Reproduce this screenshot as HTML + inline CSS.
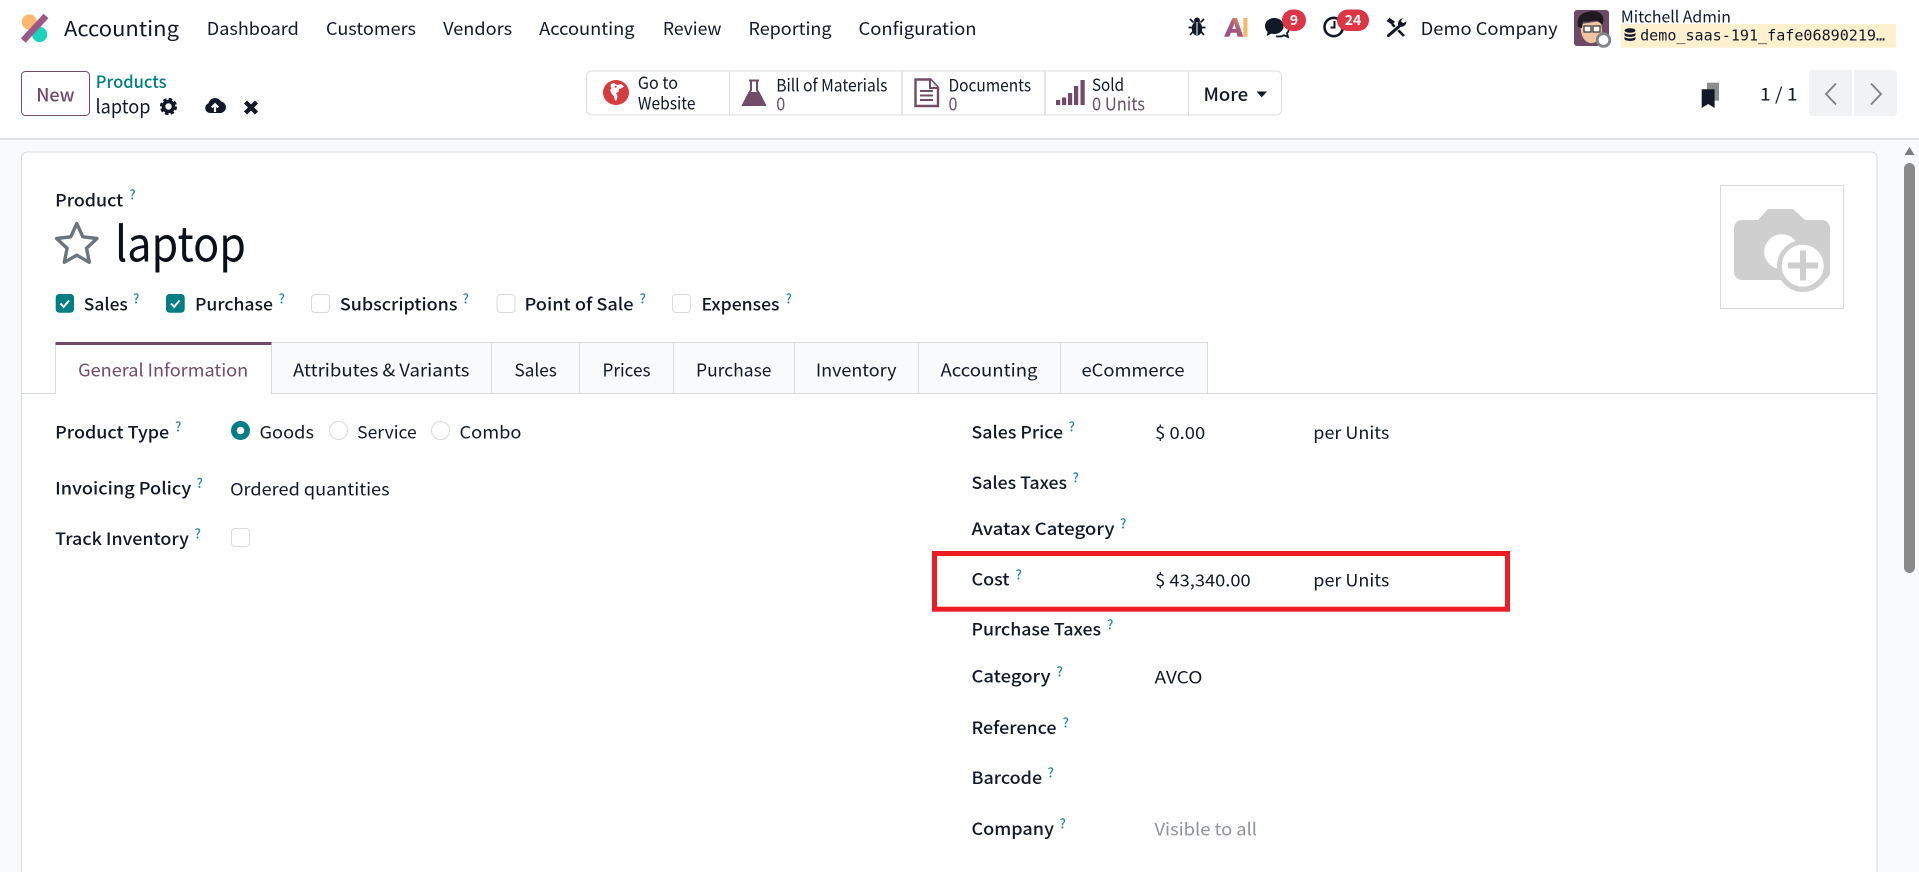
<!DOCTYPE html>
<html lang="en">
<head>
<meta charset="utf-8">
<title>laptop - Product</title>
<style>
html,body{margin:0;padding:0;width:1919px;height:872px;overflow:hidden;background:#fff}
svg{display:block;position:absolute;left:0;top:0}
text{font-family:"Noto Sans CJK JP","Liberation Sans",sans-serif;fill:#111827;font-size:17px;transform:translateX(-.5px)}
.m{font-weight:500;font-size:17px;fill:#111827}
.q{font-size:13px;font-weight:500;fill:#2a86b0}
.p{fill:#66536a}
.n{font-size:17.5px}
.t{font-size:17px}
.z{font-size:18px}
</style>
</head>
<body>
<svg width="1919" height="872" viewBox="0 0 1919 872" xmlns="http://www.w3.org/2000/svg">
<defs>
<linearGradient id="ag" x1="0" y1="1" x2="1" y2="0"><stop offset="0" stop-color="#9b4f8c"/><stop offset="0.55" stop-color="#a8587a"/><stop offset="1" stop-color="#f5a94f"/></linearGradient>
</defs>
<!-- backgrounds -->
<rect x="0" y="0" width="1919" height="139" fill="#fff"/>
<rect x="0" y="138" width="1919" height="2" fill="#dfe1e4"/>
<rect x="0" y="140" width="1919" height="732" fill="#f9fafb"/>
<path d="M21.5 880V158a6 6 0 0 1 6-6H1871a6 6 0 0 1 6 6V880Z" fill="#fff" stroke="#d8dadd" stroke-width="1"/>
<!-- scrollbar -->
<path d="M1909.5 147l5 8h-10z" fill="#7c7c7c"/>
<rect x="1904" y="163" width="11" height="410" rx="5.5" fill="#8a8a8a"/>

<!-- logo -->
<circle cx="29.4" cy="22" r="7.6" fill="#fbb970"/>
<circle cx="39.6" cy="34.5" r="7.6" fill="#1ad3bb"/>
<path d="M23.3 40.5L46 16" stroke="#9c5789" stroke-width="6.5"/>
<!-- nav -->
<text x="64.5" y="36" textLength="115" lengthAdjust="spacingAndGlyphs" style="font-size:20.5px">Accounting</text>
<text class="n" x="207.3" y="35" textLength="92" lengthAdjust="spacingAndGlyphs">Dashboard</text>
<text class="n" x="326.5" y="35" textLength="90" lengthAdjust="spacingAndGlyphs">Customers</text>
<text class="n" x="443.6" y="35" textLength="69" lengthAdjust="spacingAndGlyphs">Vendors</text>
<text class="n" x="539.6" y="35" textLength="95.5" lengthAdjust="spacingAndGlyphs">Accounting</text>
<text class="n" x="663.4" y="35" textLength="58.6" lengthAdjust="spacingAndGlyphs">Review</text>
<text class="n" x="749" y="35" textLength="83" lengthAdjust="spacingAndGlyphs">Reporting</text>
<text class="n" x="859" y="35" textLength="118" lengthAdjust="spacingAndGlyphs">Configuration</text>

<!-- systray -->
<g fill="#111827">
<ellipse cx="1197" cy="28.5" rx="5.2" ry="7"/><circle cx="1197" cy="20.5" r="3"/>
<path d="M1190 19l3.5 3.5M1204 19l-3.5 3.5M1188.5 27.5h5M1205.5 27.5h-5M1190 35l3.500-4M1204 35l-3.500-4" stroke="#111827" stroke-width="1.7" fill="none"/>
<path d="M1197 22v13" stroke="#fff" stroke-width="1"/>
</g>
<path fill-rule="evenodd" d="M1224 36.7L1232.500 18h4.500l6.300 18.700h-5.500l-1.300-4h-5.500l-1.800 4zM1232.300 29h3.500l-1.400-5.500z" fill="url(#ag)"/>
<rect x="1243.300" y="18" width="4.200" height="18.700" fill="#f9b868"/>
<path d="M1265 26c0-4.700 4.400-8 9.300-8s9.300 3.300 9.300 8-4.400 8-9.300 8c-1 0-2-.1-3-.4l-4.700 2.500 1-4.200c-1.600-1.400-2.600-3.500-2.600-5.900z" fill="#111827"/>
<path d="M1276 36.200c2.500.5 6 .3 8-1l4 1.800-1-3.800c1-1 1.600-2.200 1.800-3.400" fill="none" stroke="#111827" stroke-width="1.8"/>
<rect x="1282" y="9.5" width="24" height="21.500" rx="10.700" fill="#dc3545"/>
<text x="1294.500" y="25" text-anchor="middle" style="font-size:14px;font-weight:700;fill:#fff">9</text>
<circle cx="1333.700" cy="27" r="9.200" fill="#fff" stroke="#111827" stroke-width="2.600"/>
<path d="M1334.500 21v6.500h-4" fill="none" stroke="#111827" stroke-width="2"/>
<rect x="1337" y="9.5" width="32" height="21.500" rx="10.700" fill="#dc3545"/>
<text x="1353.500" y="25" text-anchor="middle" style="font-size:14px;font-weight:700;fill:#fff">24</text>
<!-- tools: screwdriver + wrench -->
<path d="M1392 24l12 12" stroke="#111827" stroke-width="2.600" fill="none"/>
<path d="M1386.500 21l3-3.200 5.500 4-2.800 3z" fill="#111827"/>
<path d="M1398.800 26.800l-11 8.300" stroke="#fff" stroke-width="5" fill="none"/>
<path d="M1399 26.500l-10.500 9" stroke="#111827" stroke-width="3" stroke-linecap="round" fill="none"/>
<path d="M1403 18.200c-3.500.5-5.600 3.500-4.800 7.200l2 1.500c3.500.3 6.200-2 6.300-5.500l-3.300 1.700-2.400-1.900z" fill="#111827"/>
<text x="1421.200" y="35" class="n" textLength="137" lengthAdjust="spacingAndGlyphs">Demo Company</text>

<!-- avatar -->
<rect x="1574" y="10" width="35" height="36" rx="3" fill="#6d4a66"/>
<path d="M1581 24c-1 8 1 17 9 19 7 1 12-6 12-13l-1-9z" fill="#efc4a2"/>
<path d="M1578 27c-2-9 3-14 9-15 7-2 14-1 16 5 1 3 0 6-1 8-3-4-7-5-10-4-4 1-7 1-9 0l-1 7z" fill="#1f1a22"/>
<rect x="1584" y="26" width="7" height="6" fill="#fff" stroke="#333" stroke-width="1.200"/>
<rect x="1593" y="26" width="7" height="6" fill="#fff" stroke="#333" stroke-width="1.200"/>
<circle cx="1603.500" cy="40" r="6.300" fill="#fff" stroke="#808489" stroke-width="2.800"/>
<text x="1621.400" y="22.700" style="font-size:16px" textLength="110" lengthAdjust="spacingAndGlyphs">Mitchell Admin</text>
<rect x="1621" y="24" width="275" height="23.700" fill="#fff1cf"/>
<g fill="#111827"><ellipse cx="1630" cy="30.500" rx="5.500" ry="2.300"/><path d="M1624.500 32.500c1 2.600 10 2.600 11 0v2.500c-1 2.600-10 2.600-11 0zM1624.500 36.500c1 2.600 10 2.600 11 0v2.500c-1 2.600-10 2.600-11 0z"/></g>
<text x="1640.600" y="40.700" style="font-family:'DejaVu Sans Mono','Liberation Mono',monospace;font-size:15px" textLength="245" lengthAdjust="spacingAndGlyphs">demo_saas-191_fafe06890219…</text>

<!-- New + breadcrumb -->
<rect x="21.500" y="71.500" width="68" height="44" rx="4" fill="#fff" stroke="#714b67" stroke-width="1"/>
<text x="36.700" y="101.700" style="font-size:18px;font-weight:500;fill:#714b67" textLength="38.300" lengthAdjust="spacingAndGlyphs">New</text>
<text x="96.300" y="88" style="font-size:17px;font-weight:500;fill:#017e84" textLength="70.700" lengthAdjust="spacingAndGlyphs">Products</text>
<text x="96" y="113.300" style="font-size:19px" textLength="55" lengthAdjust="spacingAndGlyphs">laptop</text>
<circle cx="168.500" cy="106.500" r="5" fill="none" stroke="#111827" stroke-width="3.600"/>
<circle cx="168.500" cy="106.500" r="7.200" fill="none" stroke="#111827" stroke-width="2.800" stroke-dasharray="3.500 2.150"/>
<path d="M210 113a5 5 0 0 1-1.500-9.700 6.800 6.800 0 0 1 12.500-1.800 5.800 5.800 0 0 1-.2 11.500z" fill="#111827"/>
<path d="M215 112v-7M211.800 107.500l3.200-3.300 3.200 3.300" stroke="#fff" stroke-width="2.200" fill="none"/>
<path d="M245.500 102l11 11M256.500 102l-11 11" stroke="#111827" stroke-width="4.400"/>

<!-- button group -->
<rect x="586.500" y="71" width="695" height="44" rx="5" fill="#fff" stroke="#dcdee1" stroke-width="1"/>
<path d="M729.500 71v44M1188.500 71v44" stroke="#dcdee1" stroke-width="1"/>
<path d="M902 71v44M1045 71v44" stroke="#dcdee1" stroke-width="1.600"/>
<!-- globe -->
<ellipse cx="616" cy="92.500" rx="13" ry="12.500" fill="#d63b3f"/>
<path d="M611 84l3-1 3 2 4-1 3 2.500-3 2-2 .5-.5 3-2.500 1 1.500 3-1 4.500-1.500 0-1-4-2.500-3-1.500-3.500 1.500-1.500-1-2.500z" fill="#fff"/>
<path d="M615 85.500l2 1-1 1.500-1.500-1z" fill="#d63b3f"/>
<text x="638.400" y="89" class="t" textLength="40.100" lengthAdjust="spacingAndGlyphs">Go to</text>
<text x="638.400" y="109.300" class="t" textLength="57.600" lengthAdjust="spacingAndGlyphs">Website</text>
<!-- flask -->
<path d="M749 80.500h10M751 81v9l-8 15h22l-8-15v-9" fill="none" stroke="#714b67" stroke-width="2"/>
<path d="M748.500 92h11l6.500 13h-24z" fill="#714b67"/>
<text x="776.700" y="91.500" class="t" textLength="111.300" lengthAdjust="spacingAndGlyphs">Bill of Materials</text>
<text x="776.700" y="110.500" class="z p" textLength="9" lengthAdjust="spacingAndGlyphs">0</text>
<!-- document -->
<path d="M915.500 79.500h15l7.500 8v18.500h-22.500z" fill="none" stroke="#714b67" stroke-width="2.400"/>
<path d="M930 79.500v8.500h8" fill="#fff" stroke="#714b67" stroke-width="2"/>
<path d="M920 91h13M920 95.500h13M920 100h13" stroke="#714b67" stroke-width="2"/>
<text x="949" y="91.500" class="t" textLength="82.600" lengthAdjust="spacingAndGlyphs">Documents</text>
<text x="949" y="110.500" class="z p" textLength="9" lengthAdjust="spacingAndGlyphs">0</text>
<!-- bars -->
<g fill="#714b67"><rect x="1056" y="100" width="4.200" height="5"/><rect x="1062" y="97.500" width="4.200" height="7.500"/><rect x="1068" y="93" width="4.200" height="12"/><rect x="1074" y="86" width="4.200" height="19"/><rect x="1080.500" y="80" width="4.200" height="25"/></g>
<text x="1092.500" y="91" class="t" textLength="32" lengthAdjust="spacingAndGlyphs">Sold</text>
<text x="1092.500" y="110.500" class="z p" textLength="53" lengthAdjust="spacingAndGlyphs">0 Units</text>
<text x="1204" y="101" style="font-size:18px;font-weight:500" textLength="44.700" lengthAdjust="spacingAndGlyphs">More</text>
<path d="M1256.500 91.500h10.500l-5.250 5.800z" fill="#111827"/>

<!-- pager -->
<rect x="1707" y="82.700" width="12" height="18" fill="#8d8d8d"/>
<path d="M1701.700 89.300h12.900v18.700l-6.450-4-6.450 4z" fill="#111827"/>
<text x="1760.500" y="100.500" style="font-size:17.500px" textLength="37.500" lengthAdjust="spacingAndGlyphs">1 / 1</text>
<path d="M1809 74a4 4 0 0 1 4-4h39v46h-39a4 4 0 0 1-4-4z" fill="#f1f2f4"/>
<path d="M1854 70h39a4 4 0 0 1 4 4v38a4 4 0 0 1-4 4h-39z" fill="#f1f2f4"/>
<path d="M1836 83.500l-10 10.500 10 10.500M1871 83.500l10 10.500-10 10.500" fill="none" stroke="#7b7f85" stroke-width="1.800"/>

<!-- title -->
<text x="55.700" y="206.700" class="m" textLength="68" lengthAdjust="spacingAndGlyphs">Product</text>
<text class="q" x="129.700" y="199.500">?</text>
<path d="M76.800 223.500l6 13.300 14.200 1.700-10.500 9.800 2.800 14-12.500-7.100-12.500 7.100 2.800-14-10.500-9.800 14.200-1.700z" fill="none" stroke="#6c757d" stroke-width="3.400" stroke-linejoin="round"/>
<text x="115.500" y="261.500" style="font-size:48px;fill:#0b0f18" textLength="131" lengthAdjust="spacingAndGlyphs">laptop</text>

<!-- image box -->
<rect x="1720.500" y="185.500" width="123" height="123" fill="#fff" stroke="#d8dadd" stroke-width="1"/>
<path d="M1742 220h16l10-11h25l12 11h17a8 8 0 0 1 8 8v44a8 8 0 0 1-8 8h-80a8 8 0 0 1-8-8v-44a8 8 0 0 1 8-8z" fill="#cfcfcf"/>
<circle cx="1781.700" cy="251.700" r="17.500" fill="#fff"/>
<circle cx="1803" cy="266" r="26" fill="#cfcfcf"/>
<circle cx="1802.700" cy="265.700" r="21" fill="#fff"/>
<path d="M1803 250.500v30M1788 265.500h30" stroke="#cfcfcf" stroke-width="6"/>

<!-- checkboxes -->
<g>
<rect x="55.700" y="294" width="18.300" height="18.700" rx="3.500" fill="#017e84"/>
<path d="M60.500 303.500l3.200 3.400 5.300-6.400" fill="none" stroke="#fff" stroke-width="2"/>
<rect x="166" y="294" width="18.700" height="18.700" rx="3.500" fill="#017e84"/>
<path d="M171 303.500l3.200 3.400 5.300-6.400" fill="none" stroke="#fff" stroke-width="2"/>
<rect x="311.500" y="294.500" width="18" height="18" rx="3.500" fill="#fff" stroke="#d8dadd"/>
<rect x="497" y="294.500" width="18" height="18" rx="3.500" fill="#fff" stroke="#d8dadd"/>
<rect x="672.500" y="294.500" width="18" height="18" rx="3.500" fill="#fff" stroke="#d8dadd"/>
</g>
<text class="m" x="84.300" y="310.700" textLength="44" lengthAdjust="spacingAndGlyphs">Sales</text><text class="q" x="133.500" y="303.500">?</text>
<text class="m" x="195.500" y="310.700" textLength="78" lengthAdjust="spacingAndGlyphs">Purchase</text><text class="q" x="279" y="303.500">?</text>
<text class="m" x="340.400" y="310.700" textLength="117.600" lengthAdjust="spacingAndGlyphs">Subscriptions</text><text class="q" x="463" y="303.500">?</text>
<text class="m" x="525" y="310.700" textLength="109" lengthAdjust="spacingAndGlyphs">Point of Sale</text><text class="q" x="640" y="303.500">?</text>
<text class="m" x="702" y="310.700" textLength="78" lengthAdjust="spacingAndGlyphs">Expenses</text><text class="q" x="786" y="303.500">?</text>

<!-- tabs -->
<rect x="271" y="342.500" width="937" height="51" fill="#f9fafb"/>
<path d="M271 342.500H1207.500V393.500" fill="none" stroke="#d8dadd"/>
<path d="M22 393.500H55.500M271.500 393.500H1877" stroke="#d8dadd"/>
<path d="M55.500 345V393.500M271.500 345V394M491.500 343V393M579.500 343V393M673.500 343V393M794.500 343V393M918.500 343V393M1060.500 343V393" stroke="#d8dadd" fill="none"/>
<rect x="55.500" y="342" width="216" height="3" fill="#714b67"/>
<text x="78.700" y="376.700" style="font-size:17.5px;fill:#714b67" textLength="170" lengthAdjust="spacingAndGlyphs">General Information</text>
<text x="293.500" y="376.700" class="n" textLength="176.500" lengthAdjust="spacingAndGlyphs">Attributes &amp; Variants</text>
<text x="515" y="376.700" class="n" textLength="42.300" lengthAdjust="spacingAndGlyphs">Sales</text>
<text x="603" y="376.700" class="n" textLength="48" lengthAdjust="spacingAndGlyphs">Prices</text>
<text x="696.500" y="376.700" class="n" textLength="75.500" lengthAdjust="spacingAndGlyphs">Purchase</text>
<text x="816.400" y="376.700" class="n" textLength="80.600" lengthAdjust="spacingAndGlyphs">Inventory</text>
<text x="941" y="376.700" class="n" textLength="97" lengthAdjust="spacingAndGlyphs">Accounting</text>
<text x="1082" y="376.700" class="n" textLength="103" lengthAdjust="spacingAndGlyphs">eCommerce</text>

<!-- left form -->
<text class="m" x="55.700" y="438.300" textLength="114" lengthAdjust="spacingAndGlyphs">Product Type</text><text class="q" x="175.500" y="431.500">?</text>
<circle cx="240.500" cy="430.500" r="9.500" fill="#017e84"/><circle cx="240.500" cy="430.500" r="3.800" fill="#fff"/>
<text x="260" y="438.300" class="t" textLength="54.500" lengthAdjust="spacingAndGlyphs">Goods</text>
<circle cx="338.500" cy="430.500" r="9" fill="#fff" stroke="#d8dadd"/>
<text x="357.700" y="438.300" class="t" textLength="59.500" lengthAdjust="spacingAndGlyphs">Service</text>
<circle cx="440.500" cy="430.500" r="9" fill="#fff" stroke="#d8dadd"/>
<text x="460" y="438.300" class="t" textLength="62" lengthAdjust="spacingAndGlyphs">Combo</text>
<text class="m" x="55.700" y="494.300" textLength="136" lengthAdjust="spacingAndGlyphs">Invoicing Policy</text><text class="q" x="197" y="488">?</text>
<text x="230.600" y="495.700" class="t" textLength="159.500" lengthAdjust="spacingAndGlyphs">Ordered quantities</text>
<text class="m" x="55.700" y="545" textLength="133.700" lengthAdjust="spacingAndGlyphs">Track Inventory</text><text class="q" x="195" y="538.500">?</text>
<rect x="231.500" y="528.500" width="18" height="18" rx="3.500" fill="#fff" stroke="#d8dadd"/>

<!-- right form -->
<text class="m" x="972" y="438.300" textLength="91.500" lengthAdjust="spacingAndGlyphs">Sales Price</text><text class="q" x="1069" y="431.500">?</text>
<text x="1155.700" y="439" class="t" textLength="50" lengthAdjust="spacingAndGlyphs">$ 0.00</text>
<text x="1313.800" y="439" class="t" textLength="76" lengthAdjust="spacingAndGlyphs">per Units</text>
<text class="m" x="972" y="489" textLength="95.500" lengthAdjust="spacingAndGlyphs">Sales Taxes</text><text class="q" x="1073" y="482.500">?</text>
<text class="m" x="972" y="535" textLength="143" lengthAdjust="spacingAndGlyphs">Avatax Category</text><text class="q" x="1120.500" y="528.500">?</text>
<rect x="934.500" y="553.500" width="573" height="55.700" fill="none" stroke="#ed1c24" stroke-width="5"/>
<text class="m" x="972" y="585.700" textLength="38" lengthAdjust="spacingAndGlyphs">Cost</text><text class="q" x="1016" y="579.500">?</text>
<text x="1155.700" y="586.700" class="t" textLength="95.500" lengthAdjust="spacingAndGlyphs">$ 43,340.00</text>
<text x="1313.800" y="586.700" class="t" textLength="76" lengthAdjust="spacingAndGlyphs">per Units</text>
<text class="m" x="972" y="635.700" textLength="129.500" lengthAdjust="spacingAndGlyphs">Purchase Taxes</text><text class="q" x="1107.500" y="629.500">?</text>
<text class="m" x="972" y="682.700" textLength="79" lengthAdjust="spacingAndGlyphs">Category</text><text class="q" x="1057" y="676.500">?</text>
<text x="1155" y="683.700" class="t" textLength="48" lengthAdjust="spacingAndGlyphs">AVCO</text>
<text class="m" x="972" y="734" textLength="85" lengthAdjust="spacingAndGlyphs">Reference</text><text class="q" x="1063" y="727.500">?</text>
<text class="m" x="972" y="784" textLength="70.600" lengthAdjust="spacingAndGlyphs">Barcode</text><text class="q" x="1048" y="777.500">?</text>
<text class="m" x="972" y="835" textLength="82.400" lengthAdjust="spacingAndGlyphs">Company</text><text class="q" x="1060" y="828.500">?</text>
<text x="1155" y="835.700" style="font-size:17px;fill:#8f9399" textLength="102.500" lengthAdjust="spacingAndGlyphs">Visible to all</text>
</svg>
</body>
</html>
